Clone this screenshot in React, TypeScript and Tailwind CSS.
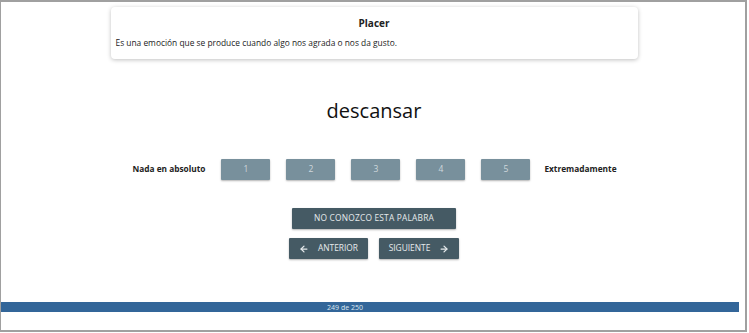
import React from "react";

export default function App() {
  const font = { fontFamily: '"Open Sans", "Noto Sans", sans-serif' };
  return (
    <div className="w-[749px] h-[333px] bg-white" style={font}>
      <div className="w-[747px] h-[332px] border-t-2 border-l border-r-2 border-b-2 border-[#a0a0a0] bg-white flex flex-col">
        <div className="flex justify-center pt-[5px] pl-[2px]">
          <div className="w-[527px] h-[52px] rounded-[4px] bg-white shadow-[0_1px_4px_rgba(0,0,0,0.25)] flex flex-col px-[5px]">
            <div className="text-center text-[10px] font-bold text-[#222] leading-none mt-[11px]">Placer</div>
            <div className="text-[8.4px] text-[#222] leading-none mt-[11px]">
              Es una emoción que se produce cuando algo nos agrada o nos da gusto.
            </div>
          </div>
        </div>
        <div className="text-center text-[20px] text-[#111] leading-none mt-[42px] pl-[2px]">descansar</div>
        <div className="flex items-center justify-center mt-[38px] pl-[3px]">
          <span className="text-[8.3px] font-bold text-[#222] mr-[16px]">Nada en absoluto</span>
          <div className="flex gap-[16px]">
            {[1, 2, 3, 4, 5].map((n) => (
              <button
                key={n}
                className="w-[49px] h-[21px] bg-[#78909c] text-[#cfd8dc] text-[8.5px] rounded-[1px] shadow-[0_1px_2px_rgba(0,0,0,0.3)] flex items-center justify-center"
              >
                {n}
              </button>
            ))}
          </div>
          <span className="text-[8.3px] font-bold text-[#222] ml-[14px]">Extremadamente</span>
        </div>
        <div className="flex flex-col items-center mt-[28px] pl-[2px]">
          <button className="w-[164px] h-[21px] bg-[#455a64] text-[#e6eaec] text-[8.4px] rounded-[1px] shadow-[0_1px_2px_rgba(0,0,0,0.3)] flex items-center justify-center tracking-[0.2px]">
            NO CONOZCO ESTA PALABRA
          </button>
          <div className="flex gap-[11px] mt-[9px]">
            <button className="w-[79px] h-[21px] bg-[#455a64] text-[#e6eaec] text-[8.4px] rounded-[1px] shadow-[0_1px_2px_rgba(0,0,0,0.3)] flex items-center justify-center gap-[9px]">
              <svg width="10" height="10" viewBox="0 0 24 24" fill="none" stroke="#e6eaec" strokeWidth="3" strokeLinecap="round" strokeLinejoin="round">
                <path d="M19 12H5" />
                <path d="M12 19l-7-7 7-7" />
              </svg>
              ANTERIOR
            </button>
            <button className="w-[80px] h-[21px] bg-[#455a64] text-[#e6eaec] text-[8.4px] rounded-[1px] shadow-[0_1px_2px_rgba(0,0,0,0.3)] flex items-center justify-center gap-[9px]">
              SIGUIENTE
              <svg width="10" height="10" viewBox="0 0 24 24" fill="none" stroke="#e6eaec" strokeWidth="3" strokeLinecap="round" strokeLinejoin="round">
                <path d="M5 12h14" />
                <path d="M12 5l7 7-7 7" />
              </svg>
            </button>
          </div>
        </div>
        <div className="mt-auto mb-[18px] w-[738px] h-[10px] bg-[#336699] flex items-center justify-center pr-[50px]">
          <span className="text-[7px] text-[#dde6f0] leading-none">249 de 250</span>
        </div>
      </div>
    </div>
  );
}
